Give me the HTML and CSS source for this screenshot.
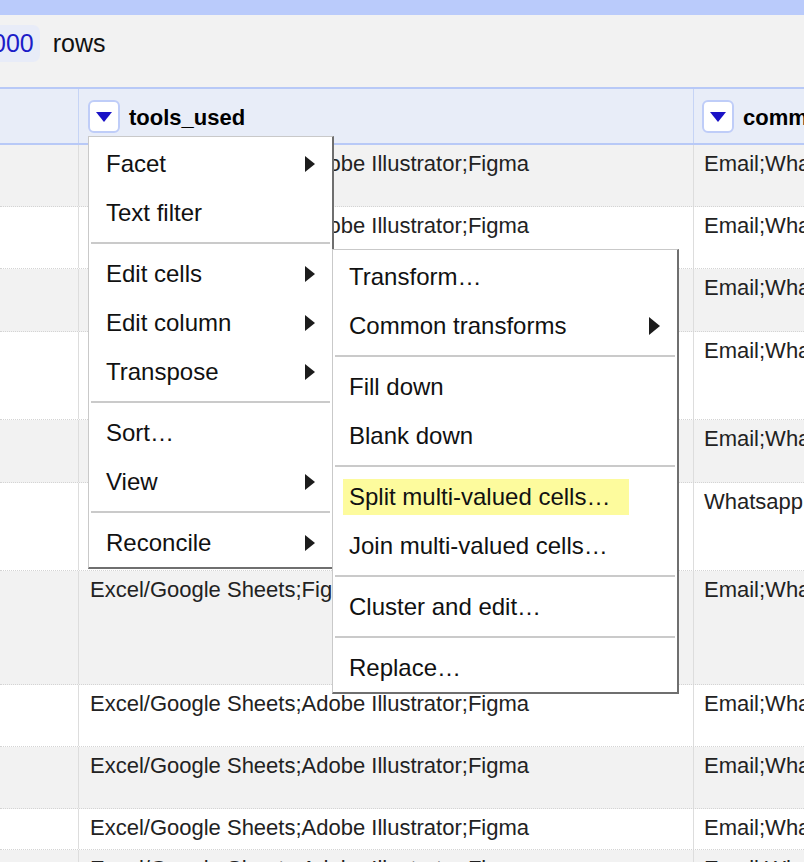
FILE: index.html
```html
<!DOCTYPE html>
<html>
<head>
<meta charset="utf-8">
<link rel="stylesheet" href="styles.css">
</head>
<body>
<div class="page">
  <div class="topbar"></div>
  <div class="summary">
    <span class="count">000</span>
    <span class="rows-label">rows</span>
  </div>

  <div class="table">
    <div class="header">
      <div class="hcell"></div>
      <div class="hcell col1"><span class="dd"></span><span class="hlabel">tools_used</span></div>
      <div class="hcell col2"><span class="dd"></span><span class="hlabel">communication_channels</span></div>
    </div>

    <div class="row alt">
      <div class="cell"></div>
      <div class="cell">Excel/Google Sheets;Adobe Illustrator;Figma</div>
      <div class="cell comm">Email;Whatsapp;Phone call</div>
    </div>
    <div class="row">
      <div class="cell"></div>
      <div class="cell">Excel/Google Sheets;Adobe Illustrator;Figma</div>
      <div class="cell comm">Email;Whatsapp;Phone call</div>
    </div>
    <div class="row alt mid">
      <div class="cell"></div>
      <div class="cell">Excel/Google Sheets;Adobe Illustrator;Figma</div>
      <div class="cell comm">Email;Whatsapp;Phone call</div>
    </div>
    <div class="row tall2">
      <div class="cell"></div>
      <div class="cell">Excel/Google Sheets;Adobe Illustrator;Figma</div>
      <div class="cell comm">Email;Whatsapp;Phone call</div>
    </div>
    <div class="row alt mid">
      <div class="cell"></div>
      <div class="cell">Excel/Google Sheets;Adobe Illustrator;Figma</div>
      <div class="cell comm">Email;Whatsapp;Phone call</div>
    </div>
    <div class="row tall2">
      <div class="cell"></div>
      <div class="cell">Excel/Google Sheets;Adobe Illustrator;Figma</div>
      <div class="cell comm">Whatsapp</div>
    </div>
    <div class="row alt tall3">
      <div class="cell"></div>
      <div class="cell">Excel/Google Sheets;Figma</div>
      <div class="cell comm">Email;Whatsapp;Phone call</div>
    </div>
    <div class="row">
      <div class="cell"></div>
      <div class="cell">Excel/Google Sheets;Adobe Illustrator;Figma</div>
      <div class="cell comm">Email;Whatsapp;Phone call</div>
    </div>
    <div class="row alt">
      <div class="cell"></div>
      <div class="cell">Excel/Google Sheets;Adobe Illustrator;Figma</div>
      <div class="cell comm">Email;Whatsapp;Phone call</div>
    </div>
    <div class="row short">
      <div class="cell"></div>
      <div class="cell">Excel/Google Sheets;Adobe Illustrator;Figma</div>
      <div class="cell comm">Email;Whatsapp;Phone call</div>
    </div>
    <div class="row alt">
      <div class="cell"></div>
      <div class="cell">Excel/Google Sheets;Adobe Illustrator;Figma</div>
      <div class="cell comm">Email;Whatsapp;Phone call</div>
    </div>
  </div>

  <div class="menu main-menu">
    <div class="mi"><span>Facet</span><span class="arrow"></span></div>
    <div class="mi"><span>Text filter</span></div>
    <div class="sep"></div>
    <div class="mi"><span>Edit cells</span><span class="arrow"></span></div>
    <div class="mi"><span>Edit column</span><span class="arrow"></span></div>
    <div class="mi"><span>Transpose</span><span class="arrow"></span></div>
    <div class="sep"></div>
    <div class="mi"><span>Sort…</span></div>
    <div class="mi"><span>View</span><span class="arrow"></span></div>
    <div class="sep"></div>
    <div class="mi"><span>Reconcile</span><span class="arrow"></span></div>
  </div>

  <div class="menu sub-menu">
    <div class="mi"><span>Transform…</span></div>
    <div class="mi"><span>Common transforms</span><span class="arrow big"></span></div>
    <div class="sep"></div>
    <div class="mi"><span>Fill down</span></div>
    <div class="mi"><span>Blank down</span></div>
    <div class="sep"></div>
    <div class="mi"><span class="hl">Split multi-valued cells…</span></div>
    <div class="mi"><span>Join multi-valued cells…</span></div>
    <div class="sep"></div>
    <div class="mi"><span>Cluster and edit…</span></div>
    <div class="sep"></div>
    <div class="mi"><span>Replace…</span></div>
  </div>
</div>
</body>
</html>
```

FILE: styles.css
```css
html, body {
  margin: 0;
  padding: 0;
  width: 804px;
  height: 862px;
  overflow: hidden;
  background: #ffffff;
}

body {
  font-family: "Liberation Sans", Arial, sans-serif;
  font-size: 22px;
  color: #111;
}

.page {
  position: relative;
  width: 804px;
  height: 862px;
  overflow: hidden;
}

.topbar {
  height: 15px;
  background: #bacbfb;
}

.summary {
  height: 72px;
  box-sizing: border-box;
  background: #f2f2f2;
  display: flex;
  align-items: flex-start;
  padding-top: 10px;
  gap: 13px;
  font-size: 25px;
}

.count {
  background: #e8ecf8;
  color: #1c1cc8;
  height: 37px;
  line-height: 37px;
  padding-right: 6px;
  margin-left: -8px;
  border-radius: 0 7px 7px 0;
}

.rows-label {
  line-height: 37px;
  color: #111;
}

.table {
  width: 804px;
  overflow: hidden;
}

.header,
.row {
  display: grid;
  grid-template-columns: 79px 615px 1fr;
  box-sizing: border-box;
}

.header {
  height: 58px;
  background: #e8edf8;
  border-top: 2px solid #b8c9f7;
  border-bottom: 2px solid #b8c9f7;
}

.hcell {
  border-right: 1px solid #c6d4f5;
  display: flex;
  align-items: center;
  gap: 9px;
  white-space: nowrap;
  overflow: hidden;
  font-weight: bold;
  color: #000;
}

.hcell.col1 {
  padding-left: 9px;
}

.hcell.col2 {
  padding-left: 8px;
  border-right: none;
}

.hlabel {
  margin-top: 3px;
}

.dd {
  flex: none;
  width: 32px;
  height: 33px;
  box-sizing: border-box;
  border: 2px solid #bfcdf8;
  border-radius: 6px;
  background: #ffffff;
  display: flex;
  align-items: center;
  justify-content: center;
}

.dd::after {
  content: "";
  width: 0;
  height: 0;
  border-top: 10px solid #1a12c6;
  border-left: 8.5px solid transparent;
  border-right: 8.5px solid transparent;
  margin-top: 1px;
}

.row {
  height: 62px;
  border-bottom: 1px dotted #d4d4d4;
  background: #ffffff;
}

.row.alt {
  background: #f2f2f2;
}

.row.mid {
  height: 63px;
}

.row.tall2 {
  height: 88px;
}

.row.tall3 {
  height: 114px;
}

.row.short {
  height: 41px;
}

.cell {
  border-right: 1px solid #dddddd;
  padding: 6px 11px 0 11px;
  line-height: 26px;
  color: #222;
  overflow: hidden;
}

.cell.comm {
  padding-left: 10px;
  border-right: none;
  white-space: nowrap;
}

.menu {
  position: absolute;
  background: #ffffff;
  box-sizing: border-box;
  border-style: solid;
  border-width: 1px 2px 2px 1px;
  border-color: #c9c9c9 #6f6f6f #6f6f6f #c9c9c9;
  padding-top: 2px;
  font-size: 24px;
}

.main-menu {
  left: 88px;
  top: 136px;
  width: 246px;
}

.sub-menu {
  left: 332px;
  top: 249px;
  width: 347px;
}

.mi {
  height: 49px;
  display: flex;
  align-items: center;
  justify-content: space-between;
  padding: 0 17px 0 17px;
  color: #111;
  white-space: nowrap;
}

.sub-menu .mi {
  padding-left: 16px;
}

.sep {
  height: 2px;
  background: #cacaca;
  margin: 5px 2px;
}

.arrow {
  width: 0;
  height: 0;
  border-left: 10px solid #1c1c1c;
  border-top: 8px solid transparent;
  border-bottom: 8px solid transparent;
}

.arrow.big {
  border-left-width: 11px;
  border-top-width: 9px;
  border-bottom-width: 9px;
}

.hl {
  background: #fdfb9d;
  padding: 4px 19px 4px 6px;
  margin-left: -6px;
}
```
